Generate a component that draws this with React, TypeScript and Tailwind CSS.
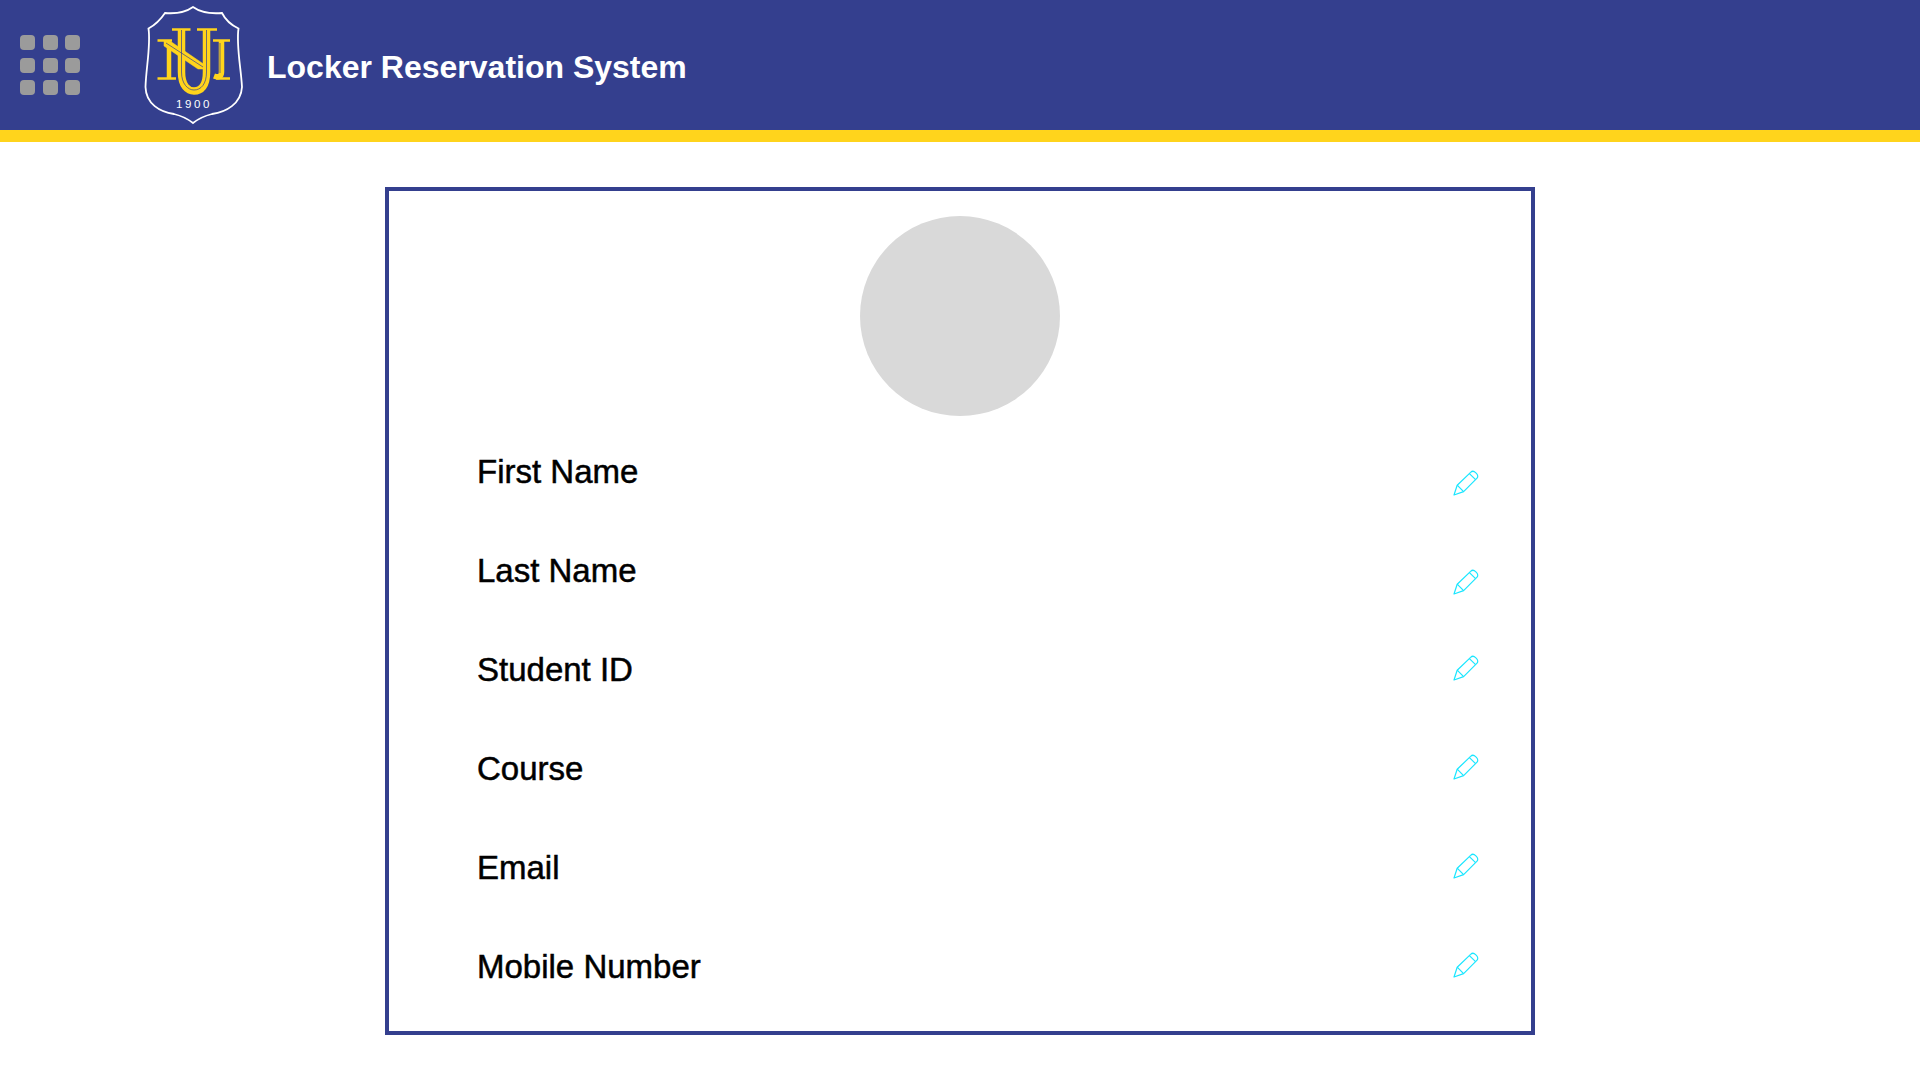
import React, { FC } from 'react'

const rows = [
    { label: 'First Name', iconClass: 'mt-[23px]' },
    { label: 'Last Name', iconClass: 'mt-[23px]' },
    { label: 'Student ID', iconClass: 'mt-[-3px]' },
    { label: 'Course', iconClass: 'mt-[-3px]' },
    { label: 'Email', iconClass: 'mt-[-3px]' },
    { label: 'Mobile Number', iconClass: 'mt-[-3px]' },
]

const PencilIcon: FC<{ className?: string }> = ({ className }) => (
    <svg viewBox="0 0 26 26" className={className} fill="none" stroke="#19e6ff" strokeWidth="1.2" strokeLinejoin="round">
        <path d="M1 25 L4.2 15.2 L17.6 2.4 C19 1 21 1 22.6 2.6 L23.6 3.6 C25.2 5.2 25 7.2 23.8 8.4 L10.6 21.6 Z" />
        <path d="M4.2 15.2 L10.6 21.6" />
        <path d="M16.4 3.6 L22.6 9.6" />
    </svg>
)

const Logo: FC = () => (
    <svg viewBox="140 0 110 130" className="w-[110px] h-[130px] shrink-0">
        <path
            d="M193 7 C186 12 176 14 165 13 C161 19 155 25 148.500 28.500 C151 45 146 68 145.500 87 C146 104 160 112 174 114 C182 116 188 119 193 123 C198 119 204 116 212 114 C226 112 241 104 242 87 C241 68 236 45 238.500 28.500 C231 25 225 19 222 13 C210 14 200 12 193 7 Z"
            fill="none"
            stroke="#ffffff"
            strokeWidth="1.800"
        />
        <g fill="none" stroke="#ffd41c" strokeLinejoin="miter">
            <path d="M169 44 V79" strokeWidth="4.500" />
            <path d="M157.500 40.500 H172 M157.500 78.500 H176" strokeWidth="2.500" />
            <path d="M164 41 L170 41 L203.500 64 L203.500 69 L198 69 L164 46 Z" fill="#ffd41c" strokeWidth="0.500" />
            <path d="M181.500 29 V72 C181.500 86 188 91 194 91 C201 91 206.500 86 206.500 72 V29" strokeWidth="7.500" />
            <path d="M172 29.500 H190.500 M197 29.500 H217" strokeWidth="2.500" />
            <path d="M221.500 40 V72 C221.500 77 218 77.500 214 76" strokeWidth="5.500" />
            <path d="M213 40.500 H230 M216 78.500 H230" strokeWidth="2.500" />
        </g>
        <g fill="none" stroke="#343f8e" strokeWidth="0.700">
            <path d="M166 43 L203 67" />
            <path d="M181.500 30 V72 C181.500 84 188 90 194 90 C201 90 206.500 84 206.500 72 V30" />
            <path d="M220 43 V73" />
        </g>
        <text x="194" y="108" textAnchor="middle" fill="#ffffff" fontSize="11.500" letterSpacing="2.600" className="font-['Liberation_Sans',sans-serif]">
            1900
        </text>
    </svg>
)

const App: FC = () => {
    return (
        <div className="min-h-[1080px] bg-white font-['Liberation_Sans',Arial,sans-serif]">
            <header className="h-[142px] bg-[#343f8e] border-b-[12px] border-[#ffd41c] flex items-center">
                <div className="ml-5 grid grid-cols-3 gap-[7.5px] w-[60px]">
                    {Array.from({ length: 9 }).map((_, i) => (
                        <div key={i} className="w-[15px] h-[15px] rounded-[4px] bg-[#9b9b9b]" />
                    ))}
                </div>
                <div className="ml-[60px]">
                    <Logo />
                </div>
                <h1 className="ml-[17px] text-[32px] leading-none font-bold text-white mt-[4px]">Locker Reservation System</h1>
            </header>

            <main className="flex justify-center pt-[45px]">
                <section className="w-[1150px] h-[848px] border-4 border-[#343f8e] pt-[25px]">
                    <div className="w-[200px] h-[200px] rounded-full bg-[#d9d9d9] mx-auto" />
                    <div className="mt-[6px] pl-[88px] pr-[52px]">
                        {rows.map((row) => (
                            <div key={row.label} className="h-[99px] flex items-center justify-between">
                                <span className="text-[33px] leading-none text-black [-webkit-text-stroke:0.5px_black]">{row.label}</span>
                                <PencilIcon className={`w-[26px] h-[26px] ${row.iconClass}`} />
                            </div>
                        ))}
                    </div>
                </section>
            </main>
        </div>
    )
}

export default App
